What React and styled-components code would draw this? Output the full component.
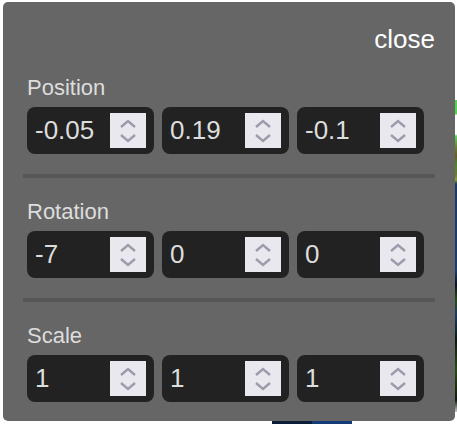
import React from 'react';
import styled, { createGlobalStyle } from 'styled-components';

const GlobalStyle = createGlobalStyle`
  html, body {
    margin: 0;
    padding: 0;
    background: #ffffff;
    font-family: 'Liberation Sans', Arial, sans-serif;
  }
`;

// The 3D scene behind the panel, only its edges show
const Viewport = styled.div`
  position: relative;
  width: 457px;
  height: 424px;
  overflow: hidden;
`;

const SceneEdge = styled.div`
  position: absolute;
  left: 440px;
  top: 100px;
  width: 20px;
  height: 312px;
  background: linear-gradient(
    180deg,
    #52d64c 0px,
    #52d64c 14px,
    #ffffff 15px,
    #ffffff 34px,
    #5ad85a 36px,
    #6a8a2a 46px,
    #6a5a22 56px,
    #4a8a22 64px,
    #6a7a2a 74px,
    #8aa030 80px,
    #163a6a 84px,
    #183e72 170px,
    #0a1220 185px,
    #2a4a18 200px,
    #1a3a66 215px,
    #0c1a10 240px,
    #2a4a12 270px,
    #0f1a0c 300px,
    #c8c8c8 312px
  );
`;

const SceneBase = styled.div`
  position: absolute;
  left: 272px;
  top: 400px;
  width: 80px;
  height: 30px;
  background: linear-gradient(90deg, #0d1d38 0px, #0d1d38 40px, #123a78 40px, #123a78 80px);
`;

const Panel = styled.div`
  position: absolute;
  left: 3px;
  top: 2px;
  width: 452px;
  height: 419px;
  box-sizing: border-box;
  padding: 22px 20px 19px;
  background: #666666;
  border-radius: 5px;
  display: flex;
  flex-direction: column;
`;

const CloseButton = styled.button`
  align-self: flex-end;
  background: none;
  border: none;
  padding: 0;
  color: #ffffff;
  font-family: 'Liberation Sans', Arial, sans-serif;
  font-size: 26px;
  line-height: 30px;
  cursor: pointer;
`;

const Section = styled.div`
  padding: 0 4px;
  margin-top: 21px;
  display: flex;
  flex-direction: column;
  gap: 6px;
`;

const Label = styled.div`
  color: #dddddd;
  font-size: 22px;
  line-height: 26px;
`;

const Fields = styled.div`
  display: grid;
  grid-template-columns: repeat(3, 127px);
  gap: 8px;
`;

const Field = styled.div`
  height: 47px;
  box-sizing: border-box;
  background: #222222;
  border-radius: 8px;
  display: flex;
  align-items: center;
  padding: 0 8px;
  gap: 4px;
`;

const ValueInput = styled.input`
  flex: 1;
  min-width: 0;
  background: transparent;
  border: none;
  outline: none;
  padding: 0;
  color: #dddddd;
  font-family: 'Liberation Sans', Arial, sans-serif;
  font-size: 26px;
`;

const Spinner = styled.div`
  width: 36px;
  height: 35px;
  background: #e9e8ef;
  display: flex;
  align-items: center;
  justify-content: center;
  flex-shrink: 0;
`;

const Divider = styled.div`
  height: 4px;
  background: #575757;
  margin-top: 20px;
`;

const SpinIcon = () => (
  <svg width="18" height="26" viewBox="0 0 18 26">
    <path d="M2 9 L9 3 L16 9" fill="none" stroke="#9d9bab" strokeWidth="2.4" />
    <path d="M2 17 L9 23 L16 17" fill="none" stroke="#9d9bab" strokeWidth="2.4" />
  </svg>
);

const groups = [
  { name: 'Position', values: ['-0.05', '0.19', '-0.1'] },
  { name: 'Rotation', values: ['-7', '0', '0'] },
  { name: 'Scale', values: ['1', '1', '1'] },
];

const App = () => (
  <Viewport>
    <GlobalStyle />
    <SceneEdge />
    <SceneBase />
    <Panel>
      <CloseButton>close</CloseButton>
      {groups.map((group, i) => (
        <React.Fragment key={group.name}>
          {i > 0 && <Divider />}
          <Section>
            <Label>{group.name}</Label>
            <Fields>
              {group.values.map((v, j) => (
                <Field key={j}>
                  <ValueInput type="text" defaultValue={v} readOnly />
                  <Spinner>
                    <SpinIcon />
                  </Spinner>
                </Field>
              ))}
            </Fields>
          </Section>
        </React.Fragment>
      ))}
    </Panel>
  </Viewport>
);

export default App;
